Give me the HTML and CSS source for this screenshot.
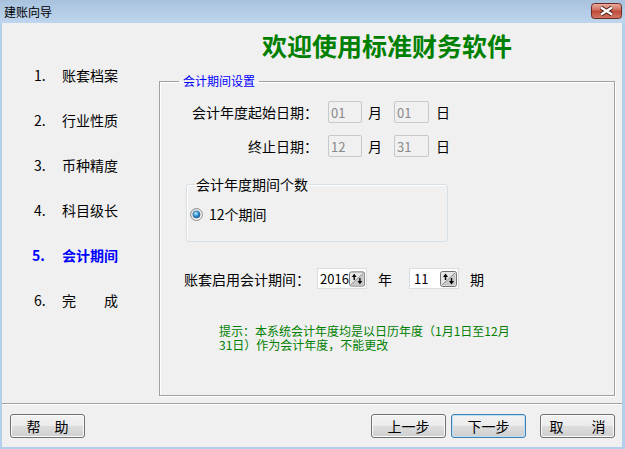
FILE: index.html
```html
<!DOCTYPE html>
<html lang="zh-CN">
<head>
    <meta charset="UTF-8">
    <title>建账向导</title>
    <link rel="stylesheet" href="styles.css">
</head>
<body>
    <div class="window">
        <div class="titlebar">
            <span class="title">建账向导</span>
            <button class="close" title="关闭">
                <svg width="31" height="16" viewBox="0 0 31 16">
                    <defs>
                        <linearGradient id="closeGrad" x1="0" y1="0" x2="0" y2="1">
                            <stop offset="0" stop-color="#eab0a2"/>
                            <stop offset="0.45" stop-color="#d06a5b"/>
                            <stop offset="0.5" stop-color="#c0483a"/>
                            <stop offset="1" stop-color="#d47a66"/>
                        </linearGradient>
                    </defs>
                    <rect x="0.5" y="0.5" width="30" height="15" rx="3" fill="url(#closeGrad)" stroke="#6a2a24"/>
                    <path d="M10 4.5 L21 11.5 M21 4.5 L10 11.5" stroke="#4a1e1a" stroke-width="4.2"/>
                    <path d="M10 4.5 L21 11.5 M21 4.5 L10 11.5" stroke="#ffffff" stroke-width="2.2"/>
                </svg>
            </button>
        </div>

        <div class="client">
            <h1 class="heading">欢迎使用标准财务软件</h1>

            <div class="main">
                <ol class="steps">
                    <li><span class="num">1.</span><span>账套档案</span></li>
                    <li><span class="num">2.</span><span>行业性质</span></li>
                    <li><span class="num">3.</span><span>币种精度</span></li>
                    <li><span class="num">4.</span><span>科目级长</span></li>
                    <li class="current"><span class="num">5.</span><span>会计期间</span></li>
                    <li><span class="num">6.</span><span>完　　成</span></li>
                </ol>

                <fieldset class="panel">
                    <legend>会计期间设置</legend>

                    <div class="row">
                        <span class="dlabel">会计年度起始日期：</span>
                        <input class="box" value="01" disabled>
                        <span class="unit">月</span>
                        <input class="box wide" value="01" disabled>
                        <span class="unit last">日</span>
                    </div>
                    <div class="row">
                        <span class="dlabel">终止日期：</span>
                        <input class="box" value="12" disabled>
                        <span class="unit">月</span>
                        <input class="box wide" value="31" disabled>
                        <span class="unit last">日</span>
                    </div>

                    <fieldset class="count">
                        <legend>会计年度期间个数</legend>
                        <label class="option">
                            <svg width="13" height="13" viewBox="0 0 13 13">
                                <defs>
                                    <linearGradient id="ring" x1="0" y1="0" x2="1" y2="1">
                                        <stop offset="0" stop-color="#d4d4d4"/>
                                        <stop offset="1" stop-color="#ffffff"/>
                                    </linearGradient>
                                    <radialGradient id="dot" cx="0.4" cy="0.35" r="0.7">
                                        <stop offset="0" stop-color="#c6ecff"/>
                                        <stop offset="0.5" stop-color="#3a9ad8"/>
                                        <stop offset="1" stop-color="#1a4f86"/>
                                    </radialGradient>
                                </defs>
                                <circle cx="6.5" cy="6.5" r="6" fill="url(#ring)" stroke="#8e8f8f"/>
                                <circle cx="6.5" cy="6.5" r="3.6" fill="url(#dot)" stroke="#215c91" stroke-width="0.6"/>
                            </svg>
                            <span>12个期间</span>
                        </label>
                    </fieldset>

                    <div class="start">
                        <span>账套启用会计期间：</span>
                        <div class="spin year">
                            <span>2016</span>
                            <svg class="spin-btn" width="17" height="16" viewBox="0 0 17 16">
                                <rect x="0.5" y="0.5" width="16" height="15" rx="2" fill="#e6e6e6" stroke="#727272"/>
                                <path d="M1.5 14.5 L15.5 1.5 L15.5 14.5 Z" fill="#c9c9c9"/>
                                <path d="M2 14 L15 2" stroke="#8a8a8a" stroke-width="1"/>
                                <path d="M3 6 L5.5 2.5 L8 6 Z" fill="#000"/>
                                <path d="M5.5 5 L5.5 9" stroke="#000" stroke-width="1.4"/>
                                <path d="M9 10 L11.5 13.5 L14 10 Z" fill="#000"/>
                                <path d="M11.5 7 L11.5 11" stroke="#000" stroke-width="1.4"/>
                            </svg>
                        </div>
                        <span class="suffix">年</span>
                        <div class="spin period">
                            <span>11</span>
                            <svg class="spin-btn" width="17" height="16" viewBox="0 0 17 16">
                                <rect x="0.5" y="0.5" width="16" height="15" rx="2" fill="#e6e6e6" stroke="#727272"/>
                                <path d="M1.5 14.5 L15.5 1.5 L15.5 14.5 Z" fill="#c9c9c9"/>
                                <path d="M2 14 L15 2" stroke="#8a8a8a" stroke-width="1"/>
                                <path d="M3 6 L5.5 2.5 L8 6 Z" fill="#000"/>
                                <path d="M5.5 5 L5.5 9" stroke="#000" stroke-width="1.4"/>
                                <path d="M9 10 L11.5 13.5 L14 10 Z" fill="#000"/>
                                <path d="M11.5 7 L11.5 11" stroke="#000" stroke-width="1.4"/>
                            </svg>
                        </div>
                        <span class="suffix">期</span>
                    </div>

                    <p class="hint">提示：本系统会计年度均是以日历年度（1月1日至12月<br>31日）作为会计年度，不能更改</p>
                </fieldset>
            </div>

            <div class="footer">
                <div class="sep"></div>
                <div class="buttons">
                    <button class="btn">帮　助</button>
                    <button class="btn prev">上一步</button>
                    <button class="btn next">下一步</button>
                    <button class="btn cancel">取　　消</button>
                </div>
            </div>
        </div>
    </div>
</body>
</html>
```

FILE: styles.css
```css
body {
    margin: 0;
    padding: 0;
    font-family: "Noto Sans CJK SC", sans-serif;
    overflow: hidden;
}

.window {
    width: 625px;
    height: 449px;
    display: flex;
    flex-direction: column;
    background: #b4cfeb;
}

.titlebar {
    flex: none;
    height: 23px;
    display: flex;
    justify-content: space-between;
    align-items: flex-start;
    background: linear-gradient(#a8c2de, #bfd5ed);
}

.title {
    font-size: 12px;
    line-height: 23px;
    padding-left: 4px;
    color: #000;
}

.close {
    display: block;
    width: 31px;
    height: 16px;
    margin: 3px 3px 0 0;
    padding: 0;
    border: 0;
    background: none;
}

.close svg {
    display: block;
}

.client {
    flex: 1;
    margin: 0 3px 2px 2px;
    background: #f0f0f0;
    display: flex;
    flex-direction: column;
}

.heading {
    margin: 10px 0 0 157px;
    width: 456px;
    text-align: center;
    font-size: 25px;
    line-height: 24px;
    font-weight: bold;
    color: #008000;
}

.main {
    display: flex;
    height: 339px;
}

/* left step list */
.steps {
    list-style: none;
    margin: 0;
    padding: 0 0 0 32px;
    width: 157px;
    box-sizing: border-box;
    flex: none;
}

.steps li {
    display: flex;
    height: 36px;
    line-height: 36px;
    margin-bottom: 9px;
    font-size: 14px;
    color: #000;
}

.num {
    width: 28px;
}

.steps li.current {
    color: #0000ff;
    font-weight: bold;
}

.steps li.current .num {
    margin-left: -2px;
    width: 30px;
}

/* period settings group */
.panel {
    flex: none;
    width: 456px;
    height: 322px;
    box-sizing: border-box;
    margin: 17px 0 0;
    padding: 13px 0 0;
    min-width: 0;
    border: 1px solid #a0a0a0;
    box-shadow: 1px 1px 0 #fff, inset 1px 1px 0 #fff;
}

.panel > legend {
    margin-left: 19px;
    padding: 0 4px;
    font-size: 12px;
    line-height: 14px;
    color: #0000ff;
}

.row {
    display: flex;
    align-items: center;
    height: 22px;
    font-size: 14px;
}

.row + .row {
    margin-top: 12px;
}

.dlabel {
    width: 158px;
    text-align: right;
    margin-right: 10px;
}

.box {
    width: 34px;
    height: 22px;
    box-sizing: border-box;
    margin: 0;
    padding: 0 0 0 2px;
    border: 1px solid #c6c9cc;
    border-radius: 2px;
    background: #f0f0f0;
    color: #8a8a8a;
    font-family: "Noto Sans CJK SC", sans-serif;
    font-size: 13px;
}

.box.wide {
    width: 35px;
}

.unit {
    margin: 0 12px 0 6px;
}

.unit.last {
    margin: 0 0 0 7px;
}

.count {
    width: 262px;
    box-sizing: border-box;
    margin: 20px 0 0 26px;
    padding: 16px 0 20px 3px;
    min-width: 0;
    border: 1px solid #d5dfe5;
    border-radius: 3px;
    box-shadow: inset 1px 1px 0 #fff;
}

.count legend {
    margin-left: 5px;
    padding: 0 1px;
    font-size: 14px;
    line-height: 14px;
}

.option {
    display: flex;
    align-items: center;
    gap: 6px;
    height: 14px;
    font-size: 14px;
}

.option svg {
    display: block;
}

.start {
    display: flex;
    align-items: center;
    height: 21px;
    margin: 26px 0 0 24px;
    font-size: 14px;
}

.spin {
    width: 50px;
    height: 21px;
    box-sizing: border-box;
    border: 1px solid #dcdde0;
    background: #fff;
    display: flex;
    align-items: center;
    justify-content: space-between;
    padding: 0 1px 0 2px;
    font-size: 13px;
    color: #000;
}

.spin.year {
    margin-left: 7px;
}

.spin.period {
    margin-left: 17px;
    padding-left: 4px;
}

.spin-btn {
    display: block;
}

.suffix {
    margin-left: 11px;
}

.hint {
    margin: 35px 0 0 59px;
    font-size: 12px;
    line-height: 14px;
    color: #008000;
}

/* bottom buttons */
.footer {
    flex: none;
    margin-top: 7px;
}

.sep {
    border-top: 1px solid #a0a0a0;
    border-bottom: 1px solid #fff;
}

.buttons {
    display: flex;
    padding: 9px 7px 0 8px;
}

.btn {
    width: 75px;
    height: 24px;
    padding: 0;
    border: 1px solid #707070;
    border-radius: 3px;
    background: linear-gradient(#f2f2f2 0%, #ebebeb 50%, #dddddd 51%, #cfcfcf 100%);
    box-shadow: inset 0 0 0 1px #fbfbfb;
    font-family: "Noto Sans CJK SC", sans-serif;
    font-size: 14px;
    line-height: 20px;
    color: #000;
}

.btn.prev {
    margin-left: auto;
}

.btn.next {
    margin-left: 5px;
    border-color: #3c7fb1;
    box-shadow: inset 0 0 0 1px #b9e2fa;
}

.btn.cancel {
    margin-left: 14px;
}
```
